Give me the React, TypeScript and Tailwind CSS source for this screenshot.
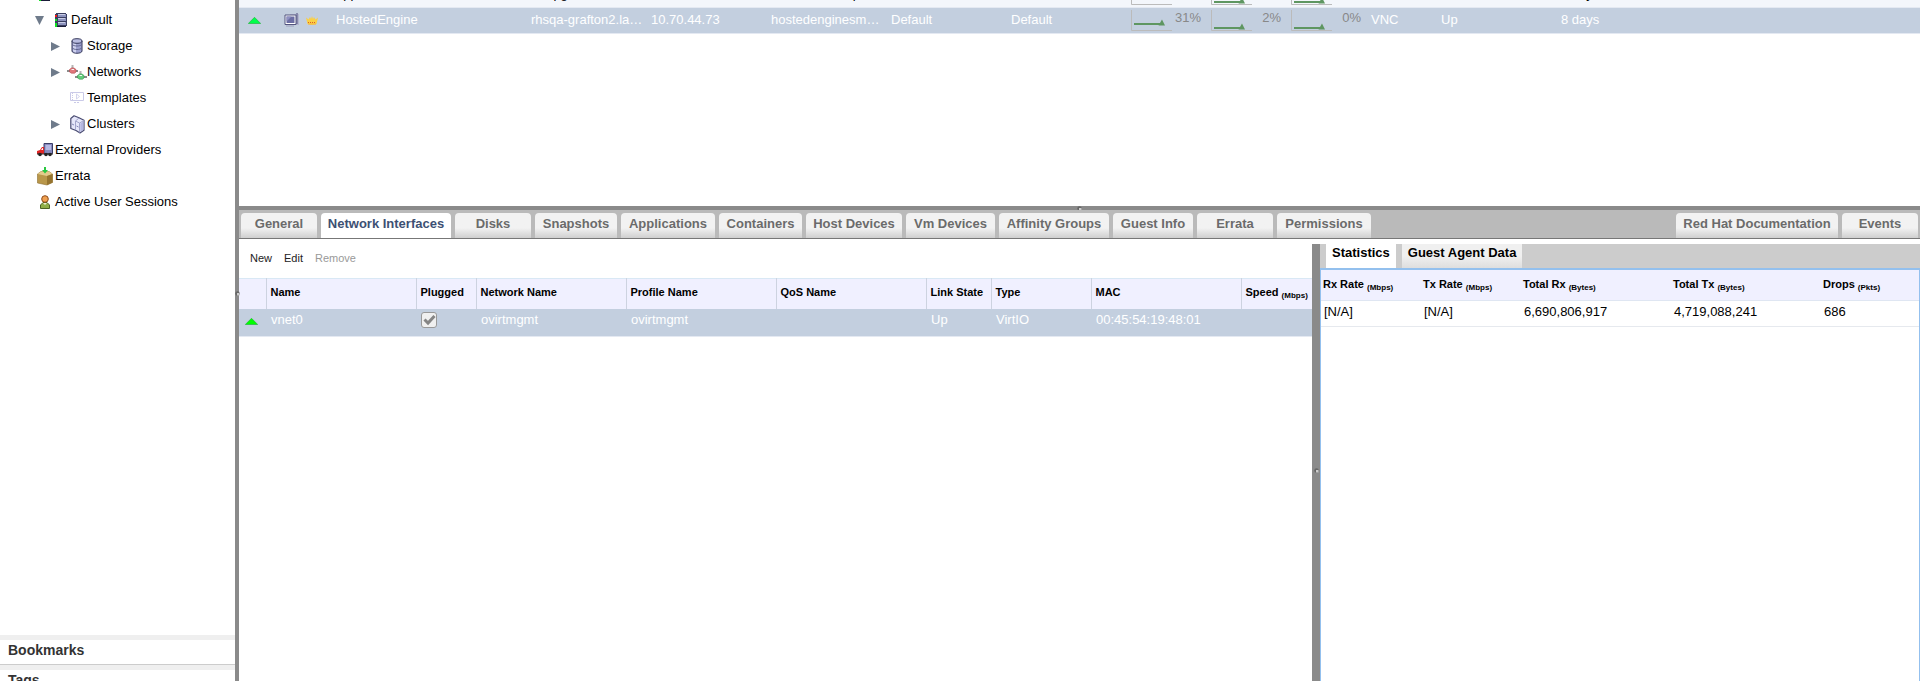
import type { ReactNode } from 'react';

interface TreeItem {
  label: string;
  icon: ReactNode;
  level: 0 | 1 | 2;
  arrow?: 'open' | 'closed';
}

interface Vm {
  name: string;
  host: string;
  ip: string;
  fqdn: string;
  cluster: string;
  dataCenter: string;
  memory: number;
  cpu: number;
  network: number;
  display: string;
  status: string;
  uptime: string;
  selected?: boolean;
}

function ServerIcon() {
  return (
    <svg width="14" height="14" viewBox="0 0 14 14" shapeRendering="crispEdges">
      <path d="M2 0h10v1h1v12h-1v1H2v-1H1V1h1z" fill="#3a3e60" />
      <path d="M4 1h8v3H4zM4 5h8v3H4zM4 9h8v3H4z" fill="#8c92bd" />
      <path d="M4 1h7v1H4zM4 5h7v1H4zM4 9h7v1H4z" fill="#c9cde6" />
      <path d="M1 2h2v2H1z" fill="#f01818" />
      <path d="M1 6h2v2H1zM1 10h2v2H1z" fill="#10e020" />
      <path d="M3 13h9v1H3z" fill="#1a1c38" />
      <path d="M1 12h2v2H1z" fill="#10e020" />
    </svg>
  );
}

function StorageIcon() {
  return (
    <svg width="12" height="16" viewBox="0 0 12 16">
      <path d="M1 3v10c0 3 10 3 10 0V3" fill="#9da1cf" stroke="#34375a" />
      <path d="M2 4v9c1 1 2 1.500 3 1.500V5z" fill="#cfd2ee" />
      <ellipse cx="6" cy="3" rx="5" ry="2.300" fill="#b9bce0" stroke="#34375a" />
      <path d="M1.500 6.500c1 2 8 2 9 0M1.500 10c1 2 8 2 9 0" fill="none" stroke="#62668f" />
    </svg>
  );
}

function NetworksIcon() {
  return (
    <svg width="20" height="15" viewBox="0 0 20 15">
      <path d="M0 6h11M8 12h12" stroke="#666" strokeWidth="1.500" />
      <path d="M5.500 0v4M13.500 6v4" stroke="#b5b5b5" strokeWidth="2" />
      <path d="M2.500 4.500l2-1.500h2.500l2 1.500V7L7.500 8.200h-3L2.500 7z" fill="#e0787c" stroke="#b0474c" strokeWidth=".6" />
      <path d="M10.500 10.500l2-1.500h2.500l2 1.500V13l-1.500 1.200h-3l-2-1.200z" fill="#62cf7c" stroke="#3a9050" strokeWidth=".6" />
      <path d="M4.500 4.500h2.500M12.500 10.500H15" stroke="#f4f4f4" />
    </svg>
  );
}

function TemplateIcon() {
  return (
    <svg width="14" height="12" viewBox="0 0 14 12" fill="none" stroke="#cacae8">
      <path d="M.5 .5h13v8H.5z" />
      <path d="M4 10.500h6" strokeDasharray="2 1" />
      <path d="M2.500 1v7" strokeDasharray="1 1" />
      <path d="M6.500 2l3 2.500-3 2.500z" strokeWidth=".8" />
    </svg>
  );
}

function ClusterIcon() {
  return (
    <svg width="15" height="19" viewBox="0 0 15 19" strokeLinejoin="round">
      <path d="M.8 3.500L4 .8l5 2 5 2.500v10L10 18l-4-2.500-5.200-2z" fill="#e6e7fa" stroke="#4a4c72" strokeWidth="1.200" />
      <path d="M5.500 6v9M5.500 6L9 3M9.500 8L14 5.500M5.500 6l4 2v9.500" fill="none" stroke="#a3a5cc" />
      <path d="M10.300 8.500L13.500 6v8.500l-3.200 2.500z" fill="#b4b6e0" />
      <path d="M2 9l2 1M6.500 11l2 1" stroke="#8789b8" />
    </svg>
  );
}

function TruckIcon() {
  return (
    <svg width="16" height="14" viewBox="0 0 16 14">
      <path d="M7 .5h8.500v10H7z" fill="#8689be" stroke="#3a3d66" />
      <path d="M8.500 2h5.500v5H8.500z" fill="#b5b8e2" />
      <path d="M0 8l3-1 2-3h2v7H0z" fill="#e02424" />
      <path d="M4 7l1.500-2H6v2z" fill="#fff" />
      <path d="M0 11h16" stroke="#333" />
      <circle cx="3" cy="11.500" r="1.800" fill="#222" />
      <circle cx="9" cy="11.500" r="1.800" fill="#222" />
      <circle cx="13" cy="11.500" r="1.800" fill="#222" />
    </svg>
  );
}

function BoxIcon() {
  return (
    <svg width="16" height="20" viewBox="0 0 16 20">
      <path d="M.5 8L4 5.500h8L15.500 8v8.500L10 19 .5 17z" fill="#b9974a" stroke="#8d6f30" strokeWidth=".6" />
      <path d="M.5 8L4 5.500h8L15.500 8 10 10z" fill="#e2cb8c" />
      <path d="M10 10l5.500-2v8.500L10 19z" fill="#96742f" />
      <path d="M7 1h2v3h2L8 7.500 5 4h2z" fill="#28c840" />
    </svg>
  );
}

function UserIcon() {
  return (
    <svg width="10" height="14" viewBox="0 0 10 14">
      <path d="M.5 13.500V10L3 7.500h4L9.500 10v3.500z" fill="#8fae48" stroke="#4c6424" />
      <circle cx="5" cy="4" r="3.300" fill="#f0a050" stroke="#8b4a1a" />
      <path d="M3 8l2 2 2-2z" fill="#e8efd0" />
    </svg>
  );
}

function UpIcon({ color }: { color: string }) {
  return (
    <svg className="block" width="13" height="7" viewBox="0 0 13 7">
      <path d="M6.500 .3L12.700 6.500H.3z" fill={color} stroke="#1fae35" strokeWidth=".6" />
    </svg>
  );
}

function VmIcon() {
  return (
    <svg width="16" height="14" viewBox="0 0 16 14">
      <path d="M6 1h9v11H8z" fill="#b3b5d0" />
      <path d="M12 0h2v11h-2z" fill="#8789ac" />
      <path d="M1 2h11v9.500H1z" fill="#fff" stroke="#53557f" />
      <path d="M2.500 3.500h8v6.500h-8z" fill="#6c6ea4" />
      <path d="M2.500 3.500h5l-5 5z" fill="#8f91c2" />
      <path d="M2 13h8" stroke="#9c9ebb" />
    </svg>
  );
}

function CrownIcon() {
  return (
    <svg width="12" height="9" viewBox="0 0 12 9">
      <path d="M0 1.500l2.500 2L4 1l1 2 1-3 1 3 1-2 1.500 2.500 2.500-2L10.500 8q-4.500 1.500-9 0z" fill="#fbd045" />
      <path d="M2 6.500h8" stroke="#d9602b" strokeDasharray="1 1" />
      <path d="M2 8h8" stroke="#f6b53c" />
    </svg>
  );
}

function Grip({ className }: { className: string }) {
  return (
    <svg className={className} width="5" height="5" viewBox="0 0 5 5">
      <circle cx="2.500" cy="2.500" r="2.200" fill="#666" />
      <path d="M2 2h2.500v2.500H2z" fill="#ccc" />
    </svg>
  );
}

const tree: TreeItem[] = [
  { label: 'Data Centers', icon: <ServerIcon />, level: 0 },
  { label: 'Default', icon: <ServerIcon />, level: 1, arrow: 'open' },
  { label: 'Storage', icon: <StorageIcon />, level: 2, arrow: 'closed' },
  { label: 'Networks', icon: <NetworksIcon />, level: 2, arrow: 'closed' },
  { label: 'Templates', icon: <TemplateIcon />, level: 2 },
  { label: 'Clusters', icon: <ClusterIcon />, level: 2, arrow: 'closed' },
  { label: 'External Providers', icon: <TruckIcon />, level: 0 },
  { label: 'Errata', icon: <BoxIcon />, level: 0 },
  { label: 'Active User Sessions', icon: <UserIcon />, level: 0 },
];

const indent = ['pl-[15px]', 'pl-[31px]', 'pl-[47px]'];

const vms: Vm[] = [
  {
    name: 'appliance', host: 'rhs-pg', ip: '', fqdn: 'localhost.localp', cluster: 'Default', dataCenter: 'Default',
    memory: 31, cpu: 0, network: 0, display: 'VNC', status: '', uptime: '8 days',
  },
  {
    name: 'HostedEngine', host: 'rhsqa-grafton2.la…', ip: '10.70.44.73', fqdn: 'hostedenginesm…',
    cluster: 'Default', dataCenter: 'Default', memory: 31, cpu: 2, network: 0, display: 'VNC', status: 'Up',
    uptime: '8 days', selected: true,
  },
];

const tabs = [
  { label: 'General', width: 'w-[76px]' },
  { label: 'Network Interfaces', width: 'w-[130px]' },
  { label: 'Disks', width: 'w-[76px]' },
  { label: 'Snapshots', width: 'w-[82px]' },
  { label: 'Applications', width: 'w-[94px]' },
  { label: 'Containers', width: 'w-[83px]' },
  { label: 'Host Devices', width: 'w-[96px]' },
  { label: 'Vm Devices', width: 'w-[89px]' },
  { label: 'Affinity Groups', width: 'w-[110px]' },
  { label: 'Guest Info', width: 'w-[80px]' },
  { label: 'Errata', width: 'w-[76px]' },
  { label: 'Permissions', width: 'w-[94px]' },
];

const nicColumns = ['', 'Name', 'Plugged', 'Network Name', 'Profile Name', 'QoS Name', 'Link State', 'Type', 'MAC'];

const stats = [
  { label: 'Rx Rate', unit: 'Mbps', value: '[N/A]' },
  { label: 'Tx Rate', unit: 'Mbps', value: '[N/A]' },
  { label: 'Total Rx', unit: 'Bytes', value: '6,690,806,917' },
  { label: 'Total Tx', unit: 'Bytes', value: '4,719,088,241' },
  { label: 'Drops', unit: 'Pkts', value: '686' },
];

function Tree() {
  return (
    <ul className="-mt-[19px]">
      {tree.map(item => (
        <li key={item.label} className={`flex h-[26px] items-center ${indent[item.level]}`}>
          <span className="flex w-4 shrink-0 justify-center">
            {item.arrow && (
              <svg width="9" height="9" viewBox="0 0 9 9" fill="#6f7b8b">
                <path d={item.arrow === 'open' ? 'M0 0h9L4.500 9z' : 'M0 0l9 4.500L0 9z'} />
              </svg>
            )}
          </span>
          <span className="ml-1.5 flex w-4 shrink-0 justify-center *:shrink-0">{item.icon}</span>
          <span className="ml-0.5">{item.label}</span>
        </li>
      ))}
    </ul>
  );
}

function Usage({ value }: { value: number }) {
  const y = value > 20 ? 14 : 18;
  return (
    <div className="flex items-start justify-between pt-0.5 pr-[7px]">
      <svg width="42" height="22" viewBox="0 0 42 22">
        <path d="M.5 0v20.500H41" fill="none" stroke="#bbb" />
        <path d={`M3 ${y}h29`} stroke="#5e9661" strokeWidth="2" />
        <path d={`M27.500 ${y + 1.500}l3.500-6 3 6z`} fill="#5e9661" />
      </svg>
      <span className="text-[#888]">{value}%</span>
    </div>
  );
}

function VmTable() {
  return (
    <table className="-mt-[19px] w-full table-fixed">
      <colgroup>
        <col className="w-[42px]" />
        <col className="w-[52px]" />
        <col className="w-[195px]" />
        <col className="w-[120px]" />
        <col className="w-[120px]" />
        <col className="w-[120px]" />
        <col className="w-[120px]" />
        <col className="w-[120px]" />
        <col className="w-[80px]" />
        <col className="w-[80px]" />
        <col className="w-[80px]" />
        <col className="w-[70px]" />
        <col className="w-[120px]" />
        <col />
      </colgroup>
      <tbody>
        {vms.map(vm => (
          <tr
            key={vm.name}
            className={`h-[26px] border-b border-[#e4e9f2] ${vm.selected ? 'bg-[#c3cfdf] text-white' : 'bg-[#f3f6fb]'}`}
          >
            <td className="pl-[9px]">{vm.selected && <UpIcon color="#00ff4c" />}</td>
            <td>
              {vm.selected && (
                <div className="flex items-center gap-1.5 pl-[3px]">
                  <VmIcon />
                  <CrownIcon />
                </div>
              )}
            </td>
            <td className="pl-[3px]">{vm.name}</td>
            <td className="pl-[3px] whitespace-nowrap">{vm.host}</td>
            <td className="pl-[3px]">{vm.ip}</td>
            <td className="pl-[3px] whitespace-nowrap">{vm.fqdn}</td>
            <td className="pl-[3px]">{vm.cluster}</td>
            <td className="pl-[3px]">{vm.dataCenter}</td>
            <td className="pl-[3px]"><Usage value={vm.memory} /></td>
            <td className="pl-[3px]"><Usage value={vm.cpu} /></td>
            <td className="pl-[3px]"><Usage value={vm.network} /></td>
            <td className="pl-[3px]">{vm.display}</td>
            <td className="pl-[3px]">{vm.status}</td>
            <td className="pl-[3px]">{vm.uptime}</td>
          </tr>
        ))}
      </tbody>
    </table>
  );
}

function Tab({ label, width, active }: { label: string; width: string; active?: boolean }) {
  return (
    <button
      className={`flex h-[25px] shrink-0 justify-center rounded-t-sm pt-[3px] font-bold whitespace-nowrap ${width} ${
        active ? 'bg-white text-[#3d5073]' : 'bg-linear-to-b from-[#f2f2f2] from-60% to-[#cfcfcf] text-[#6b6b6b]'
      }`}
    >
      {label}
    </button>
  );
}

function NicTable() {
  return (
    <table className="w-full table-fixed text-left">
      <colgroup>
        <col className="w-[27px]" />
        <col className="w-[150px]" />
        <col className="w-[60px]" />
        <col className="w-[150px]" />
        <col className="w-[150px]" />
        <col className="w-[150px]" />
        <col className="w-[65px]" />
        <col className="w-[100px]" />
        <col className="w-[150px]" />
        <col />
      </colgroup>
      <thead>
        <tr className="h-[30px] border-t border-[#d9e8f5] bg-[#f0f0ff] text-[11px]">
          {nicColumns.map(name => (
            <th key={name} className="border-r border-[#cdd3e0] pb-[3px] pl-1 whitespace-nowrap">{name}</th>
          ))}
          <th className="pb-[3px] pl-1 whitespace-nowrap">
            Speed <sub className="text-[8px]">(Mbps)</sub>
          </th>
        </tr>
      </thead>
      <tbody>
        <tr className="h-7 border-b border-[#e4e9f2] bg-[#c3cfdf] text-white">
          <td className="pb-px pl-1.5"><UpIcon color="#00ff00" /></td>
          <td className="pb-1 pl-[5px]">vnet0</td>
          <td className="pb-1 pl-[5px]">
            <label className="relative block size-4">
              <input
                type="checkbox"
                aria-label="Plugged"
                defaultChecked
                className="block size-4 appearance-none rounded-[3px] border border-[#999] bg-[#f0f0f0]"
              />
              <svg className="pointer-events-none absolute inset-0" width="16" height="16" viewBox="0 0 16 16">
                <path d="M3.500 7.500l3.500 3.500 6.500-7" fill="none" stroke="#858585" strokeWidth="3" />
              </svg>
            </label>
          </td>
          <td className="pb-1 pl-[5px]">ovirtmgmt</td>
          <td className="pb-1 pl-[5px]">ovirtmgmt</td>
          <td />
          <td className="pb-1 pl-[5px]">Up</td>
          <td className="pb-1 pl-[5px]">VirtIO</td>
          <td className="pb-1 pl-[5px]">00:45:54:19:48:01</td>
          <td />
        </tr>
      </tbody>
    </table>
  );
}

function StatsPanel() {
  return (
    <section className="flex w-[600px] shrink-0 flex-col">
      <div className="flex h-6 shrink-0 gap-1.5 bg-[#ccc] pl-1.5 font-bold">
        <button className="bg-white px-1.5 pb-1.5">Statistics</button>
        <button className="bg-linear-to-b from-[#f0f0f0] from-50% to-[#dedede] px-1.5 pb-1.5">Guest Agent Data</button>
      </div>
      <div className="flex-1 border-x border-t-2 border-[#93c0ee]">
        <table className="w-full table-fixed text-left">
          <colgroup>
            <col className="w-[100px]" />
            <col className="w-[100px]" />
            <col className="w-[150px]" />
            <col className="w-[150px]" />
            <col />
          </colgroup>
          <thead>
            <tr className="h-[30px] border-b border-[#dfe6f2] bg-[#f0f0ff] text-[11px]">
              {stats.map(s => (
                <th key={s.label} className="pb-0.5 pl-0.5 whitespace-nowrap">
                  {s.label} <sub className="text-[8px]">({s.unit})</sub>
                </th>
              ))}
            </tr>
          </thead>
          <tbody>
            <tr className="h-[26px] border-b border-[#e6e9ee]">
              {stats.map(s => (
                <td key={s.label} className="pb-0.5 pl-[3px]">{s.value}</td>
              ))}
            </tr>
          </tbody>
        </table>
      </div>
    </section>
  );
}

export default function App() {
  return (
    <div className="flex h-screen overflow-hidden bg-white font-['Liberation_Sans',Arial,sans-serif] text-[13px] leading-4 text-black">
      <aside className="flex w-[235px] shrink-0 flex-col overflow-hidden">
        <div className="min-h-0 flex-1">
          <Tree />
        </div>
        <div className="h-[46px] shrink-0 text-[14px] font-bold text-[#333]">
          <h2 className="h-[30px] border-t-[5px] border-b border-t-[#efefef] border-b-[#ccc] pl-2 leading-5">Bookmarks</h2>
          <h2 className="h-[30px] border-t-[5px] border-[#efefef] pl-2 leading-5">Tags</h2>
        </div>
      </aside>
      <div className="relative w-1 shrink-0 bg-[#8a8a8a]">
        <Grip className="absolute top-[291px] left-0" />
      </div>
      <main className="flex min-w-0 flex-1 flex-col">
        <div className="h-[206px] shrink-0 overflow-hidden">
          <VmTable />
        </div>
        <div className="flex h-1 shrink-0 justify-center bg-[#8a8a8a]">
          <Grip className="shrink-0" />
        </div>
        <nav className="flex h-[29px] shrink-0 items-end gap-1 border-b border-[#777] bg-[#bababa] px-0.5">
          {tabs.map(tab => (
            <Tab key={tab.label} {...tab} active={tab.label === 'Network Interfaces'} />
          ))}
          <div className="ml-auto flex gap-1">
            <Tab label="Red Hat Documentation" width="w-[162px]" />
            <Tab label="Events" width="w-[76px]" />
          </div>
        </nav>
        <div className="flex min-h-0 flex-1 pt-[5px]">
          <section className="min-w-0 flex-1">
            <div className="flex h-[34px] items-center gap-3 px-[11px] pb-1.5 text-[11px] text-[#222]">
              <button>New</button>
              <button>Edit</button>
              <button disabled className="text-[#999]">Remove</button>
            </div>
            <NicTable />
          </section>
          <div className="flex w-2 shrink-0 items-center bg-[#8a8a8a] pt-4">
            <Grip className="ml-0.5" />
          </div>
          <StatsPanel />
        </div>
      </main>
    </div>
  );
}
